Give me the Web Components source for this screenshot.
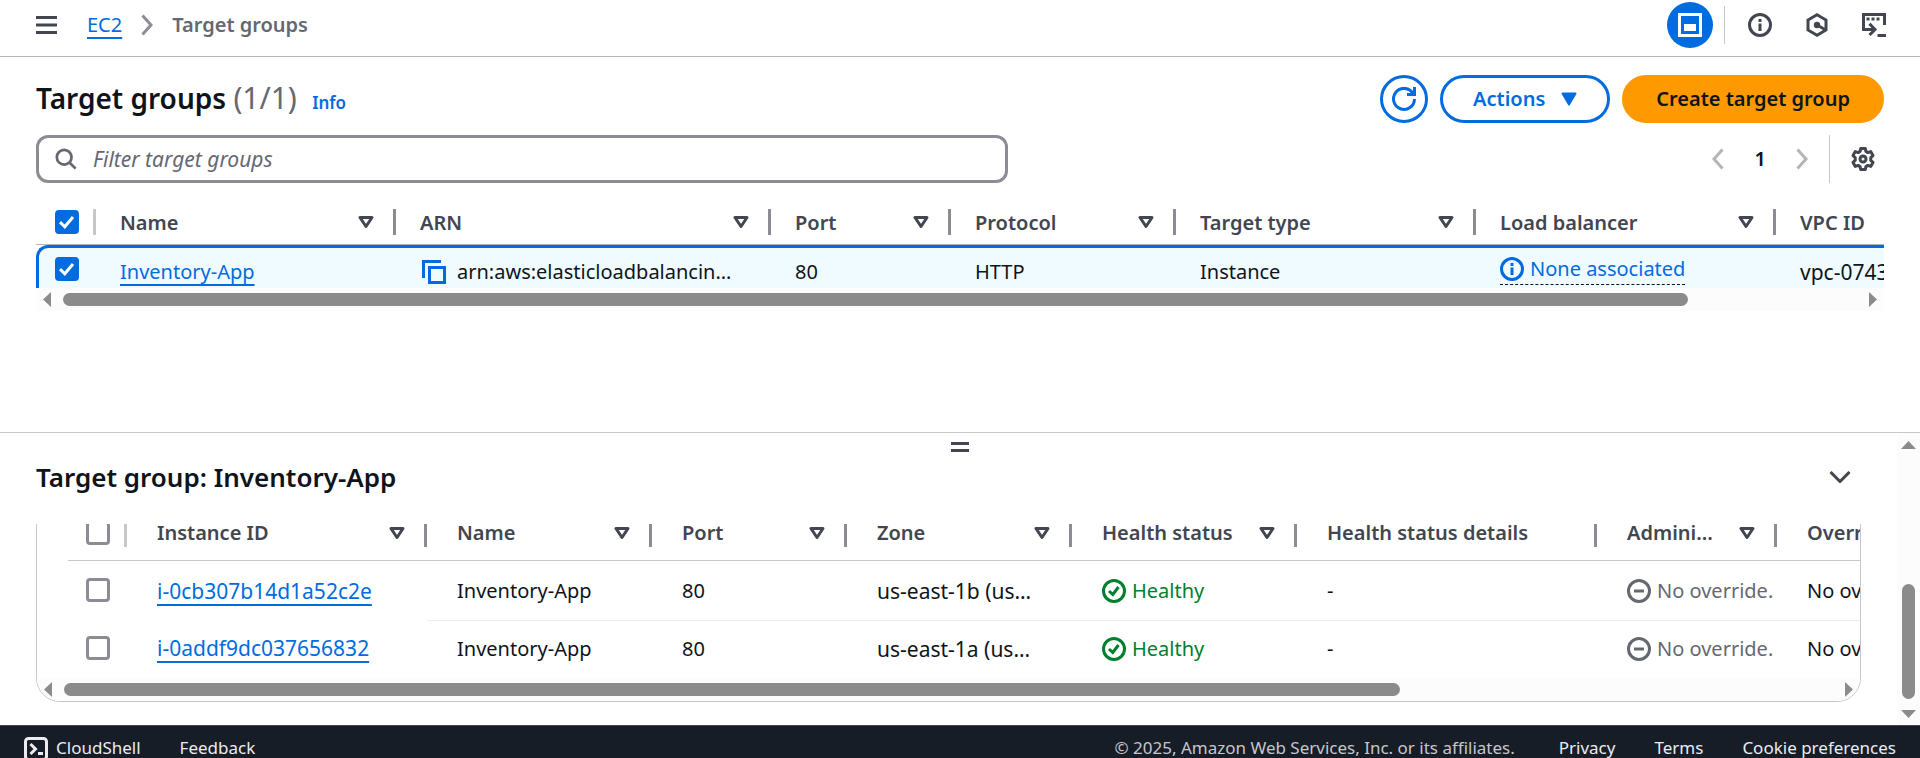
<!DOCTYPE html>
<html lang="en">
<head>
<meta charset="utf-8">
<title>Target groups | EC2</title>
<style>
  html, body { margin: 0; height: 100%; overflow: hidden; background: #fff; }
  body {
    font: 400 20px/30px "Noto Sans", "Open Sans", sans-serif;
    color: #0f141a;
    --blue: #006ce0; --heading: #424650; --muted: #656871;
    --border: #8c8c94; --line: #b4b4bb; --disabled: #b4b4bb;
  }
</style>
</head>
<body>
<console-app></console-app>

<script>
const ICONS = {
  menu: ['0 0 24 24', '<path d="M1 4.500h21M1 12h21M1 19.500h21"/>'],
  right: ['0 0 12 22', '<path d="M1.500 1.500 10 11 1.500 20.500"/>'],
  left: ['0 0 12 22', '<path d="M10.500 1.500 2 11l8.500 9.500"/>'],
  down: ['0 0 22 12', '<path d="M1.500 1 11 10.500 20.500 1"/>'],
  panel: ['0 0 24 24', '<path d="M1.500 1.500h21v21h-21z"/><path d="M6 11h12v7H6z" fill="currentColor" stroke="none"/>'],
  info: ['0 0 24 24', '<circle cx="12" cy="12" r="10.500"/><path d="M12 10.500V18M12 6v3"/>'],
  hexagon: ['0 0 24 24', '<path d="M12 1.800 21 7v10l-9 5.200L3 17V7z"/><circle cx="12" cy="12" r="3.200" fill="currentColor" stroke="none"/><path d="M12 12l8 4.500"/>'],
  shellout: ['0 0 24 24', '<path d="M22.500 12V1.500h-21v15H11M7.500 10.800 13 16.500l-5.500 5.500M15.500 22.500H24"/><path d="M4.500 6h3M9.500 6h3M14.500 6h3"/>'],
  refresh: ['0 0 24 24', '<path d="M15 7.500h7.500V0M22.500 12a10.500 10.500 0 1 1-1.500-5.500"/>'],
  caret: ['0 0 16 14', '<path d="M1.500 1.500h13L8 12.500z" fill="currentColor" stroke-width="2" stroke-linejoin="round"/>'],
  sort: ['0 0 16 14', '<path d="M2 2.500h12L8 11.500z" stroke-linejoin="round"/>'],
  search: ['0 0 24 24', '<circle cx="10" cy="10" r="8"/><path d="M15.500 15.500 22.500 22.500"/>'],
  gear: ['0 0 24 24', '<path stroke-linejoin="round" d="M9.700 1.500h4.600l.6 2.900 2 1.200 2.800-1 2.300 4-2.200 2v2.800l2.200 2-2.300 4-2.800-1-2 1.200-.6 2.900H9.700l-.6-2.900-2-1.200-2.800 1-2.300-4 2.200-2v-2.800l-2.200-2 2.300-4 2.800 1 2-1.200z"/><circle cx="12" cy="12" r="3"/>'],
  copy: ['0 0 24 24', '<path d="M7.500 7.500h15v15h-15zM1.500 18V1.500H19"/>'],
  healthy: ['0 0 24 24', '<circle cx="12" cy="12" r="10.500"/><path d="M7 12l3.800 3.500L16.500 8"/>'],
  minus: ['0 0 24 24', '<circle cx="12" cy="12" r="10.500"/><path d="M7 12h10"/>'],
  terminal: ['0 0 24 24', '<rect x="1.500" y="1.500" width="21" height="21" rx="3"/><path d="M6.500 7l5 5-5 5M14 16.500h5"/>'],
  grip: ['0 0 18 10', '<path d="M0 1.500h18M0 8.500h18"/>'],
  tick: ['0 0 24 24', '<path d="M5 12.200 9.800 16.800 18 7"/>']
};

const define = (name, html) => customElements.define(name, class extends HTMLElement {
  connectedCallback() {
    if (this.shadowRoot) return;
    const root = this.attachShadow({ mode: 'open' });
    root.innerHTML = '<style>*{box-sizing:border-box}a{color:var(--blue)}button{font:inherit;color:inherit;background:none;border:0;padding:0;margin:0;cursor:pointer}</style>' +
      (typeof html === 'function' ? html(this) : html);
  }
});

define('ui-icon', el => {
  const [box, body] = ICONS[el.getAttribute('name')];
  const [, , w, h] = box.split(' ');
  return `<style>:host{display:inline-block;flex:none;width:${w}px;height:${h}px}svg{display:block;width:100%;height:100%}</style>
  <svg viewBox="${box}" fill="none" stroke="currentColor" stroke-width="3" aria-hidden="true">${body}</svg>`;
});

define('ui-check', el => `<style>
  :host{display:block;width:24px;height:24px}
  label{display:grid;width:24px;height:24px}
  input,ui-icon{grid-area:1/1}
  input{appearance:none;margin:0;width:24px;height:24px;border:3px solid var(--border);border-radius:4px;background:#fff}
  input:checked{background:var(--blue);border-color:var(--blue)}
  ui-icon{display:none;color:#fff;pointer-events:none}
  input:checked+ui-icon{display:block}
  </style>
  <label><input type="checkbox" aria-label="${el.getAttribute('label')}" ${el.hasAttribute('checked') ? 'checked' : ''}><ui-icon name="tick"></ui-icon></label>`);

define('ui-status', el => `<style>
  :host{display:inline-flex;align-items:center;gap:6px;line-height:30px;vertical-align:top}
  :host([kind=healthy]){color:#00802f}
  :host([kind=minus]){color:var(--muted)}
  :host([kind=info]){line-height:24px;color:var(--blue);padding-bottom:3px;border-bottom:1px dashed #0f141a}
  </style><ui-icon name="${el.getAttribute('kind')}"></ui-icon><slot></slot>`);

/* Classic scroll bar; --before, --thumb and --after are the shares of its track. */
define('scroll-bar', el => {
  const v = el.hasAttribute('vertical');
  return `<style>
  :host{display:grid;background:#fcfcfc;${v
    ? 'grid-template-rows:8px var(--before) var(--thumb) var(--after) 8px;padding:8px 0 7px;justify-items:center;width:23px'
    : 'grid-template-columns:8px var(--before) var(--thumb) var(--after) 8px;padding:0 7px;align-items:center;height:23px'}}
  i{background:#8b8b8b}
  .t{border-radius:7px;${v ? 'grid-row:3;width:13px;height:100%' : 'grid-column:3;height:13px'}}
  .a,.b{${v ? 'width:15px;height:8px' : 'width:8px;height:15px'}}
  .a{clip-path:polygon(${v ? '50% 0,100% 100%,0 100%' : '0 50%,100% 0,100% 100%'})}
  .b{clip-path:polygon(${v ? '50% 100%,100% 0,0 0' : '100% 50%,0 0,0 100%'});${v ? 'grid-row:5' : 'grid-column:5'}}
  </style><i class="a"></i><i class="t"></i><i class="b"></i>`;
});

define('console-header', `<style>
  :host{display:flex;align-items:center;height:57px;padding:0 34px 6px 35px;border-bottom:1px solid var(--line);color:var(--heading);flex:none}
  nav{display:flex;align-items:center;flex:1;margin-left:28px;gap:19px}
  a{text-decoration-thickness:2px;text-underline-offset:5px;text-decoration-skip-ink:none}
  nav ui-icon{color:var(--border)}
  b{font-weight:600;color:var(--muted)}
  .tools{display:flex;align-items:center}
  button{display:flex}
  .on{width:46px;height:46px;border-radius:50%;background:var(--blue);color:#fff;align-items:center;justify-content:center}
  .rule{width:1px;height:38px;background:#c6c6cd;margin:0 23px 0 11px}
  .set{display:flex;gap:33px}
  </style>
  <button aria-label="Open navigation"><ui-icon name="menu"></ui-icon></button>
  <nav aria-label="Breadcrumbs"><a href="#ec2">EC2</a><ui-icon name="right"></ui-icon><b>Target groups</b></nav>
  <div class="tools">
    <button class="on" aria-label="Split panel"><ui-icon name="panel"></ui-icon></button>
    <span class="rule"></span>
    <div class="set">
      <button aria-label="Info"><ui-icon name="info"></ui-icon></button>
      <button aria-label="Amazon Q"><ui-icon name="hexagon"></ui-icon></button>
      <button aria-label="CloudShell"><ui-icon name="shellout"></ui-icon></button>
    </div>
  </div>`);

define('ui-button', el => `<style>
  :host{display:block}
  button{display:flex;align-items:center;justify-content:center;gap:16px;height:48px;padding:0 30px;border:3px solid var(--blue);border-radius:24px;color:var(--blue);font-weight:600;white-space:nowrap}
  :host([primary]) button{padding:0 31px;background:#f90;border-color:#f90;color:#0f141a}
  :host([round]) button{width:48px;padding:0}
  </style><button ${el.title ? `aria-label="${el.title}"` : ''}><slot></slot></button>`);

const TABLE_CSS = `
  table{table-layout:fixed;border-collapse:separate;border-spacing:0;white-space:nowrap}
  th,td{padding:0 0 0 var(--inset);text-align:left;font-weight:400}
  th{border-bottom:1px solid var(--line);color:var(--heading);font-weight:600}
  .h{display:flex;align-items:center}
  .h span{flex:1}
  .h i{width:3px;height:26px;background:var(--border);margin-left:19px}
  th:first-child i{background:#c6c6cd;margin-left:auto}
  a{text-decoration-thickness:2px;text-underline-offset:5px;text-decoration-skip-ink:none}`;
const head = cols => cols.map(([label, width, sort = true]) =>
  `<th scope="col" style="width:${width}px"><div class="h">` +
  (label ? `<span>${label}</span>${sort ? '<ui-icon name="sort"></ui-icon>' : ''}` : '<ui-check label="Select all" ' + (sort ? '' : 'checked') + '></ui-check>') +
  '<i></i></div></th>').join('');

define('target-groups-table', `<style>${TABLE_CSS}
  :host{display:block;overflow:hidden;--inset:24px}
  .view{overflow:hidden}
  table{width:2076px}
  th{height:45px}
  .h span{padding-top:2px}
  th:first-child{padding-left:19px}
  td{height:43px;padding-top:9px;line-height:30px;vertical-align:top;background:#f0fbff;border-top:3px solid var(--blue)}
  td:first-child{border-left:3px solid var(--blue);border-top-left-radius:12px;padding-left:16px}
  td ui-icon{color:var(--blue)}
  .c{display:flex;align-items:center;gap:11px;margin-left:2px}
  .c button{display:flex}
  .vpc{font-size:21px}
  scroll-bar{--before:12fr;--thumb:1625fr;--after:181fr}
  </style>
  <div class="view"><table>
    <thead><tr>${head([['', 60, false], ['Name', 300], ['ARN', 375], ['Port', 180], ['Protocol', 225], ['Target type', 300], ['Load balancer', 300], ['VPC ID', 336]])}</tr></thead>
    <tbody><tr>
      <td><ui-check label="Select Inventory-App" checked></ui-check></td>
      <td><a href="#inventory-app">Inventory-App</a></td>
      <td><div class="c"><button aria-label="Copy ARN"><ui-icon name="copy"></ui-icon></button>arn:aws:elasticloadbalancin…</div></td>
      <td>80</td><td>HTTP</td><td>Instance</td>
      <td><ui-status kind="info">None associated</ui-status></td>
      <td class="vpc">vpc-0743</td>
    </tr></tbody>
  </table></div>
  <scroll-bar></scroll-bar>`);

define('target-groups-panel', `<style>
  :host{display:block;flex:1;min-height:0;overflow:hidden;padding:18px 36px 0}
  header{display:flex;align-items:center;gap:12px}
  h1{margin:0;padding-top:2px;flex:1;font-size:28px;line-height:38px;font-weight:600}
  h1 span{font-size:30px;font-weight:400;color:var(--muted)}
  h1 a{font-size:17px;text-decoration:none;margin-left:8px}
  .bar{display:flex;align-items:center;justify-content:space-between;margin:12px 0 17px}
  .filter{display:flex;align-items:center;gap:16px;width:972px;max-width:60%;height:48px;padding:0 16px;border:3px solid var(--border);border-radius:12px;color:var(--muted)}
  .filter ui-icon{width:22px;height:22px}
  input{flex:1;min-width:0;border:0;outline:0;padding:0;font:inherit;font-size:21px;background:none}
  input::placeholder{color:var(--muted);font-style:italic;opacity:1}
  .pages{display:flex;align-items:center;height:48px;color:var(--disabled)}
  .pages button{display:flex}
  .pages b{margin:0 30px 0 31px;font-weight:600;line-height:30px;color:#0f141a}
  .rule{width:1px;height:48px;background:#c6c6cd;margin:0 21px}
  .pages .prefs{margin-right:9px;color:var(--heading)}
  </style>
  <header>
    <h1>Target groups <span>(1/1)</span> <a href="#info">Info</a></h1>
    <ui-button round title="Refresh"><ui-icon name="refresh"></ui-icon></ui-button>
    <ui-button>Actions<ui-icon name="caret"></ui-icon></ui-button>
    <ui-button primary>Create target group</ui-button>
  </header>
  <div class="bar">
    <label class="filter"><ui-icon name="search"></ui-icon><input type="text" placeholder="Filter target groups" aria-label="Filter target groups"></label>
    <div class="pages">
      <button aria-label="Previous page"><ui-icon name="left"></ui-icon></button><b>1</b>
      <button aria-label="Next page"><ui-icon name="right"></ui-icon></button>
      <span class="rule"></span>
      <button class="prefs" aria-label="Preferences"><ui-icon name="gear"></ui-icon></button>
    </div>
  </div>
  <target-groups-table></target-groups-table>`);

const target = (id, zone) => `<tr>
  <td><ui-check label="Select ${id}"></ui-check></td>
  <td><a href="#${id}">${id}</a></td><td>Inventory-App</td><td>80</td><td class="zone">us-east-${zone} (us…</td>
  <td><ui-status kind="healthy">Healthy</ui-status></td><td>-</td>
  <td><ui-status kind="minus">No override.</ui-status></td><td>No override</td></tr>`;

define('targets-table', `<style>${TABLE_CSS}
  :host{display:block;flex:none;overflow:hidden;border:1px solid #c6c6cd;border-radius:24px;--inset:30px}
  .view{overflow:hidden;padding:24px 0 0 31px}
  table{width:2009px}
  th{height:55px;border-color:#c6c6cd}
  .h span{line-height:16px}
  .h i{height:28px}
  td{height:60px;vertical-align:middle}
  th:first-child,td:first-child{padding-left:18px}
  td:first-child{padding-bottom:2px}
  tbody tr:first-child td:nth-child(n+3){border-bottom:1px solid #ebebf0}
  tbody tr:last-child td{height:57px;padding-bottom:2px}
  tbody tr:last-child td:first-child{padding-bottom:4px}
  td a,.zone{font-size:21px}
  scroll-bar{--before:12fr;--thumb:1335fr;--after:445fr}
  </style>
  <div class="view"><table>
    <thead><tr>${head([['', 59], ['Instance ID', 300], ['Name', 225], ['Port', 195], ['Zone', 225], ['Health status', 225], ['Health status details', 300, false], ['Admini…', 180], ['Override details', 300]])}</tr></thead>
    <tbody>${target('i-0cb307b14d1a52c2e', '1b')}${target('i-0addf9dc037656832', '1a')}</tbody>
  </table></div>
  <scroll-bar></scroll-bar>`);

define('split-panel', `<style>
  :host{display:grid;grid-template:auto auto 201px/minmax(0,1fr) 23px;flex:none;border-top:1px solid #c6c6cd;background:#fff}
  .grip{grid-area:1/1/2/3;justify-self:center;display:flex;margin-top:9px;color:var(--heading)}
  scroll-bar{grid-area:1/2/4/3;--before:135fr;--thumb:115fr;--after:11fr}
  header{grid-area:2/1;display:flex;align-items:center;justify-content:space-between;padding:7px 46px 29px 36px}
  h2{margin:0;font-size:26px;line-height:36px;font-weight:600}
  header button{display:flex;color:var(--heading)}
  .body{grid-area:3/1;display:flex;flex-direction:column;justify-content:flex-end;overflow:hidden;padding:0 36px 23px}
  </style>
  <scroll-bar vertical></scroll-bar>
  <button class="grip" aria-label="Resize panel"><ui-icon name="grip"></ui-icon></button>
  <header><h2>Target group: Inventory-App</h2><button aria-label="Close panel"><ui-icon name="down"></ui-icon></button></header>
  <div class="body"><targets-table></targets-table></div>`);

define('console-footer', `<style>
  :host{display:flex;align-items:flex-start;gap:39px;height:33px;overflow:hidden;flex:none;padding:11px 24px 0;border-top:1px solid #424650;background:#161d26;color:#ebebf0;font-size:17px;line-height:21px;white-space:nowrap}
  a{color:inherit;text-decoration:none}
  .shell{display:flex;gap:8px}
  p{margin:0 5px 0 auto;color:#c6c6cd}
  </style>
  <a class="shell" href="#cloudshell"><ui-icon name="terminal"></ui-icon>CloudShell</a>
  <a href="#feedback">Feedback</a>
  <p>© 2025, Amazon Web Services, Inc. or its affiliates.</p>
  <a href="#privacy">Privacy</a><a href="#terms">Terms</a><a href="#cookies">Cookie preferences</a>`);

define('console-app', `<style>:host{display:flex;flex-direction:column;height:100vh}</style>
  <console-header></console-header>
  <target-groups-panel></target-groups-panel>
  <split-panel></split-panel>
  <console-footer></console-footer>`);
</script>
</body>
</html>
